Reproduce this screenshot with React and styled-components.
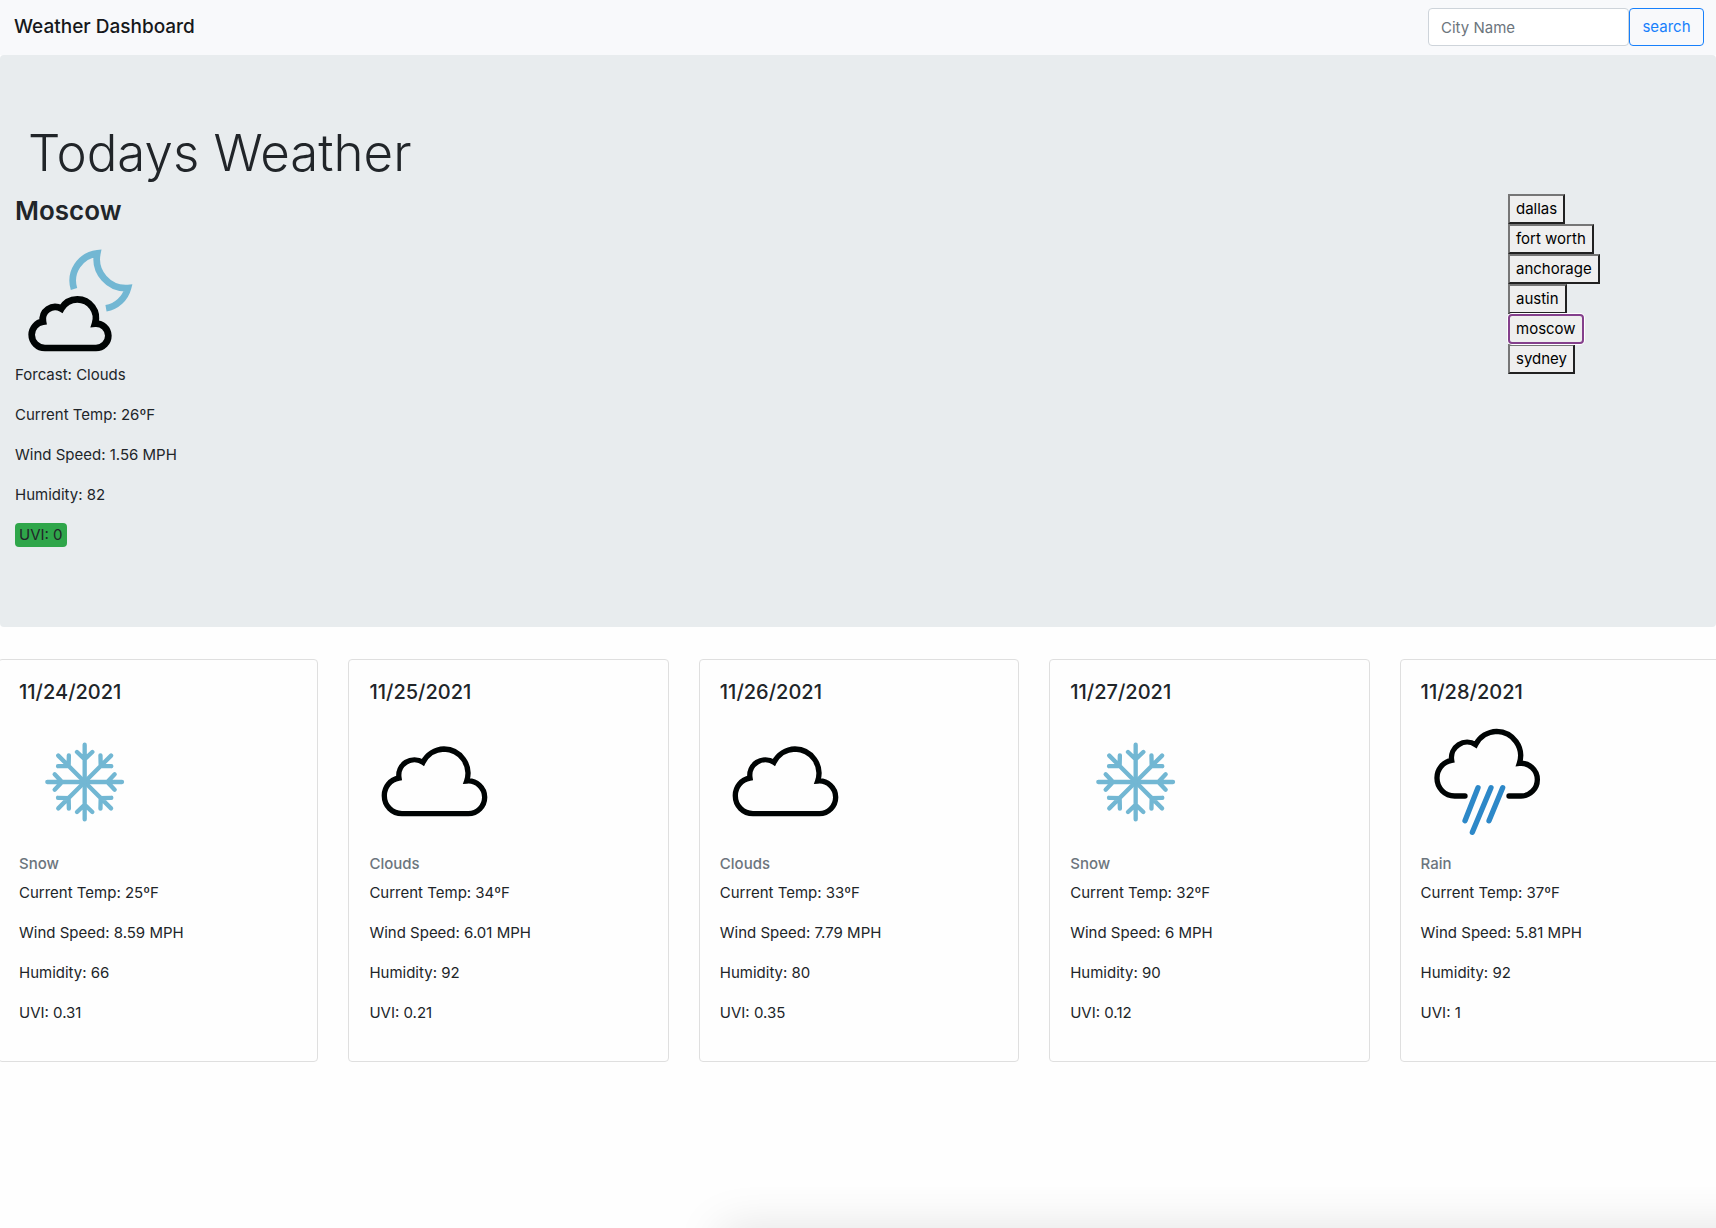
import React, { useState } from 'react';
import styled, { createGlobalStyle, css } from 'styled-components';

const sky = '#72b7d3';
const rainBlue = '#2d88c8';

const GlobalStyle = createGlobalStyle`
  *, *::before, *::after { box-sizing: border-box; }
  body {
    margin: 0;
    background: #fefefe;
    color: #212529;
    font-family: Inter, "Liberation Sans", sans-serif;
    font-size: 15px;
    line-height: 24px;
    overflow-x: hidden;
  }
`;

const Navbar = styled.nav`
  display: flex;
  align-items: center;
  justify-content: space-between;
  padding: 8px 12px 9px 14px;
  background: #f8f9fb;
`;

const Brand = styled.a`
  color: #16181a;
  font-size: 19px;
  font-weight: 500;
  line-height: 30px;
  text-decoration: none;
`;

const SearchForm = styled.form`
  display: flex;
`;

const field = css`
  height: 38px;
  padding: 6px 12px;
  border-radius: 4px;
  font: inherit;
`;

const SearchInput = styled.input`
  ${field}
  width: 201px;
  border: 1px solid #ced4da;
  background: #fff;
  color: #495057;
  &::placeholder { color: #6c757d; opacity: 1; }
`;

const SearchButton = styled.button`
  ${field}
  min-width: 75px;
  border: 1px solid #1780fb;
  background: transparent;
  color: #1780fb;
  cursor: pointer;
`;

const Hero = styled.header`
  margin-bottom: 32px;
  padding: 64px 0;
  border-radius: 4px;
  background: #e8ecee;
`;

const HeroTitle = styled.h1`
  margin: 0 0 8px;
  padding-left: 28px;
  font-size: 51px;
  font-weight: 300;
  line-height: 67px;
`;

const HeroColumns = styled.div`
  display: flex;
  justify-content: space-between;
`;

const Today = styled.section`
  padding-left: 15px;
`;

const CityName = styled.h2`
  margin: 0 0 8px;
  font-size: 26px;
  font-weight: 600;
  line-height: 34px;
`;

const Line = styled.p`
  margin: 0 0 16px;
`;

const Badge = styled.span`
  display: inline-block;
  padding: 0 4px;
  border-radius: 4px;
  background: #2fa64a;
`;

const History = styled.aside`
  display: flex;
  flex-direction: column;
  align-items: flex-start;
  width: 208px;
`;

const CityButton = styled.button`
  padding: 1px 6px;
  border: 2px solid;
  border-color: #767676 #212121 #212121 #767676;
  background: #efefef;
  color: #000;
  font: inherit;
  cursor: pointer;
  ${({ $active }) => $active && css`
    z-index: 1;
    border-color: #84408c;
    border-radius: 4px;
    box-shadow: 0 0 0 1px #fff;
  `}
`;

const Forecast = styled.main`
  overflow: hidden;
`;

const CardRow = styled.div`
  display: grid;
  grid-template-columns: repeat(5, 1fr);
  gap: 30px;
  margin: 0 -4px 0 -2px;
`;

const Card = styled.article`
  padding: 20px;
  border: 1px solid #dfdfdf;
  border-radius: 4px;
  background: #fefefe;
`;

const CardTitle = styled.h3`
  margin: 0 0 12px;
  font-size: 20px;
  font-weight: 500;
  line-height: 24px;
`;

const CardSubtitle = styled.h4`
  margin: 0 0 8px;
  color: #6c757d;
  font-size: 15px;
  font-weight: 500;
  line-height: 19px;
`;

const Icon = styled.svg`
  display: block;
  fill: none;
  stroke: #000404;
  stroke-width: ${({ $weight }) => $weight || 16};
`;

const WindowShadow = styled.div`
  position: fixed;
  left: 42%;
  right: -80px;
  bottom: -42px;
  height: 40px;
  box-shadow: 0 0 48px rgba(0, 0, 0, 0.13);
  pointer-events: none;
`;

const CloudyNight = () => (
  <Icon width="128" height="127" viewBox="0 0 384 381" $weight={20} aria-hidden="true">
    <path stroke={sky} d="M177 159A83 83 0 0 1 247 52A87 87 0 0 0 339 156A83 83 0 0 1 273 217" />
    <path d="M90 336H243A37 37 0 0 0 280 299A37 37 0 0 0 240 263A56 56 0 0 0 187 190A56 56 0 0 0 139 218A37 37 0 0 0 84 257A40 40 0 0 0 50 296A40 40 0 0 0 90 336Z" />
  </Icon>
);

const Clouds = () => (
  <Icon width="128" height="138" viewBox="0 0 384 414" aria-hidden="true">
    <path d="M99 293H298A49 49 0 0 0 347 244A49 49 0 0 0 293 195A73 73 0 0 0 225 99A73 73 0 0 0 162 139A47 47 0 0 0 90 186A53 53 0 0 0 46 240A53 53 0 0 0 99 293Z" />
  </Icon>
);

const Rain = () => (
  <Icon width="128" height="138" viewBox="0 0 384 414" strokeLinecap="round" aria-hidden="true">
    <path d="M264 240H300A49 49 0 0 0 349 191A49 49 0 0 0 295 142A73 73 0 0 0 227 46A73 73 0 0 0 164 86A47 47 0 0 0 92 133A53 53 0 0 0 48 187A53 53 0 0 0 101 240H132" />
    <path stroke={rainBlue} d="M171 215L132 314M210 215L154 349M245 215L204 314" />
  </Icon>
);

const Snow = () => (
  <Icon width="128" height="138" viewBox="0 0 384 414" $weight={13} strokeLinecap="round" aria-hidden="true">
    <g stroke={sky} transform="translate(197 198)">
      {[0, 45, 90, 135, 180, 225, 270, 315].map((angle) => (
        <path key={angle} transform={`rotate(${angle})`} d="M0 0V-112M-23 -90L0 -68L23 -90" />
      ))}
    </g>
  </Icon>
);

const icons = { Clouds, Rain, Snow };

const days = [
  { date: '11/24/2021', sky: 'Snow', temp: 25, wind: '8.59', humidity: 66, uvi: '0.31' },
  { date: '11/25/2021', sky: 'Clouds', temp: 34, wind: '6.01', humidity: 92, uvi: '0.21' },
  { date: '11/26/2021', sky: 'Clouds', temp: 33, wind: '7.79', humidity: 80, uvi: '0.35' },
  { date: '11/27/2021', sky: 'Snow', temp: 32, wind: '6', humidity: 90, uvi: '0.12' },
  { date: '11/28/2021', sky: 'Rain', temp: 37, wind: '5.81', humidity: 92, uvi: '1' },
];

const cities = ['dallas', 'fort worth', 'anchorage', 'austin', 'moscow', 'sydney'];

export default function App() {
  const [active, setActive] = useState('moscow');

  return (
    <>
      <GlobalStyle />
      <Navbar>
        <Brand href="#">Weather Dashboard</Brand>
        <SearchForm onSubmit={(event) => event.preventDefault()}>
          <SearchInput type="text" placeholder="City Name" aria-label="City Name" />
          <SearchButton type="submit">search</SearchButton>
        </SearchForm>
      </Navbar>

      <Hero>
        <HeroTitle>Todays Weather</HeroTitle>
        <HeroColumns>
          <Today>
            <CityName>Moscow</CityName>
            <CloudyNight />
            <Line>Forcast: Clouds</Line>
            <Line>Current Temp: 26ºF</Line>
            <Line>Wind Speed: 1.56 MPH</Line>
            <Line>Humidity: 82</Line>
            <Line><Badge>UVI: 0</Badge></Line>
          </Today>
          <History>
            {cities.map((city) => (
              <CityButton key={city} type="button" $active={city === active} onClick={() => setActive(city)}>
                {city}
              </CityButton>
            ))}
          </History>
        </HeroColumns>
      </Hero>

      <Forecast>
        <CardRow>
          {days.map((day) => {
            const DayIcon = icons[day.sky];
            return (
              <Card key={day.date}>
                <CardTitle>{day.date}</CardTitle>
                <DayIcon />
                <CardSubtitle>{day.sky}</CardSubtitle>
                <Line>Current Temp: {day.temp}ºF</Line>
                <Line>Wind Speed: {day.wind} MPH</Line>
                <Line>Humidity: {day.humidity}</Line>
                <Line>UVI: {day.uvi}</Line>
              </Card>
            );
          })}
        </CardRow>
      </Forecast>
      <WindowShadow />
    </>
  );
}
